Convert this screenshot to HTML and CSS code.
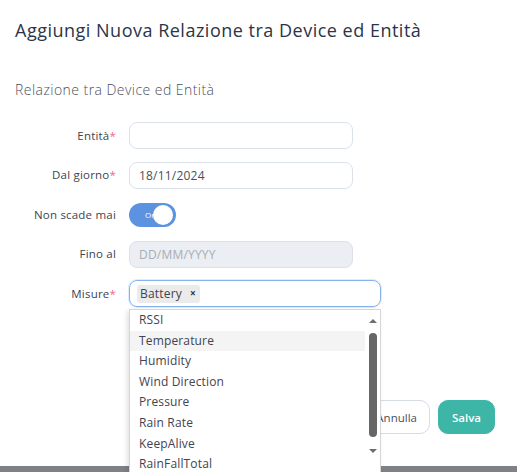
FILE: index.html
```html
<!DOCTYPE html>
<html lang="it">
<head>
<meta charset="utf-8">
<title>Aggiungi Nuova Relazione</title>
<link rel="stylesheet" href="styles.css">
</head>
<body>
<div class="modal">
  <div class="modal-header">
    <h1 class="title">Aggiungi Nuova Relazione tra Device ed Entità</h1>
  </div>
  <div class="modal-body">
    <h2 class="subtitle">Relazione tra Device ed Entità</h2>
    <div class="form">
      <label class="label">Entità<span class="req">*</span></label>
      <div class="field"><div class="input"></div></div>

      <label class="label">Dal giorno<span class="req">*</span></label>
      <div class="field"><div class="input">18/11/2024</div></div>

      <label class="label">Non scade mai</label>
      <div class="field"><div class="toggle"><span class="toggle-text">On</span><span class="knob"></span></div></div>

      <label class="label">Fino al</label>
      <div class="field"><div class="input disabled">DD/MM/YYYY</div></div>

      <label class="label">Misure<span class="req">*</span></label>
      <div class="field select-field">
        <div class="input wide focus"><span class="chip">Battery <span class="chip-x">×</span></span></div>
        <div class="dropdown">
          <ul class="options">
            <li>RSSI</li>
            <li class="hover">Temperature</li>
            <li>Humidity</li>
            <li>Wind Direction</li>
            <li>Pressure</li>
            <li>Rain Rate</li>
            <li>KeepAlive</li>
            <li>RainFallTotal</li>
          </ul>
          <div class="scrollbar">
            <span class="arrow up"></span>
            <span class="thumb"></span>
            <span class="arrow down"></span>
          </div>
        </div>
      </div>
    </div>
  </div>
  <div class="modal-footer">
    <button class="btn btn-cancel">Annulla</button>
    <button class="btn btn-save">Salva</button>
  </div>
</div>
</body>
</html>
```
FILE: styles.css
```css
* { box-sizing: border-box; }
html, body { margin: 0; padding: 0; }
body {
  background: #7e8185;
  width: 517px;
  height: 472px;
  overflow: hidden;
  font-family: "Open Sans", "Liberation Sans", sans-serif;
  color: #3a4150;
}
.modal {
  background: #fff;
  height: 466px;
  display: flex;
  flex-direction: column;
}
.modal-header { padding: 17px 15px 0; }
.title {
  margin: 0;
  font-size: 18px;
  font-weight: 500;
  color: #2a3547;
  line-height: 26px;
  letter-spacing: 0.5px;
}
.modal-body { padding: 0 15px; }
.subtitle {
  margin: 37px 0 0;
  font-size: 14px;
  font-weight: 300;
  color: #4b515b;
  line-height: 20px;
  letter-spacing: 0.45px;
}
.form {
  margin-top: 22px;
  display: grid;
  grid-template-columns: 101px 1fr;
  column-gap: 13px;
  row-gap: 12.5px;
  align-items: center;
}
.label {
  text-align: right;
  font-size: 11.5px;
  color: #3d4452;
  line-height: 16px;
  letter-spacing: 0.2px;
}
.req { color: #f06a7e; }
.field { position: relative; height: 27px; display: flex; align-items: center; }
.input {
  width: 224px;
  height: 27px;
  border: 1px solid #dbe1ea;
  border-radius: 8px;
  padding: 0 9px;
  font-size: 12px;
  line-height: 25px;
  color: #4a505a;
  display: flex;
  align-items: center;
  letter-spacing: 0.2px;
}
.input.disabled { background: #ebeef3; color: #a9adb4; }
.input.wide { width: 252px; padding: 0 7px; }
.input.focus { border-color: #86b3ee; box-shadow: 0 0 0 1px rgba(134,179,238,0.25); }
.chip {
  background: #ebebeb;
  border-radius: 3px;
  height: 18px;
  padding: 0 4px 0 3px;
  display: inline-flex;
  align-items: center;
  gap: 8px;
  font-size: 12px;
  color: #3f4450;
}
.chip-x { font-size: 10px; font-weight: 700; color: #333; }
.toggle {
  width: 47px;
  height: 24px;
  border-radius: 12px;
  background: #5b93e0;
  position: relative;
  display: flex;
  align-items: center;
}
.toggle-text {
  color: #fff;
  font-size: 8px;
  margin-left: 16px;
}
.knob {
  position: absolute;
  right: 3px;
  top: 2px;
  width: 20px;
  height: 20px;
  border-radius: 50%;
  background: #fff;
}
.dropdown {
  position: absolute;
  left: 0;
  top: 29px;
  width: 252px;
  height: 170px;
  background: #fff;
  border: 1px solid #d6d6d6;
  box-shadow: -2px 2px 5px rgba(0,0,0,0.12);
  display: flex;
  z-index: 5;
}
.options {
  list-style: none;
  margin: 0;
  padding: 0;
  flex: 1;
}
.options li {
  height: 20.6px;
  line-height: 20.6px;
  padding-left: 9px;
  font-size: 12px;
  color: #3f4450;
  letter-spacing: 0.15px;
}
.options li.hover { background: #f4f4f4; }
.scrollbar {
  width: 15px;
  display: flex;
  flex-direction: column;
  align-items: center;
  padding-top: 9px;
}
.arrow {
  width: 0; height: 0;
  border-left: 4px solid transparent;
  border-right: 4px solid transparent;
}
.arrow.up { border-bottom: 4px solid #6d6d6d; }
.arrow.down { border-top: 4px solid #6d6d6d; margin-top: 12px; }
.thumb {
  width: 8px;
  height: 104px;
  margin-top: 10px;
  background: #666;
  border-radius: 4px;
}
.modal-footer {
  margin-top: auto;
  margin-bottom: 32px;
  padding-right: 22px;
  display: flex;
  justify-content: flex-end;
  gap: 8px;
}
.btn {
  height: 34px;
  border-radius: 10px;
  font-family: inherit;
  font-size: 11.5px;
  padding: 0 12px;
}
.btn-cancel { background: #fff; border: 1px solid #d5dce7; color: #4a505a; }
.btn-save { background: #3db5a7; border: 1px solid #3db5a7; color: #fff; font-weight: 600; padding: 0 13px; }
```
